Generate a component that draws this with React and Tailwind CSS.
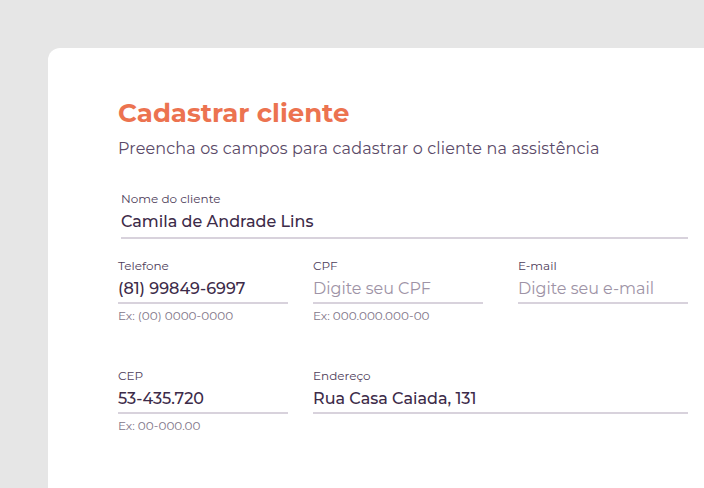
import React from "react";

const Field = ({ label, value, placeholder, helper, className = "", padClass = "pb-[3px]" }) => (
  <div className={className}>
    <label className="block text-[12px] leading-[14px] text-[#4e3d5a]">{label}</label>
    <div className={`mt-[6px] border-b-2 border-[#d8d2dc] ${padClass}`}>
      {value ? (
        <span className="block text-[16px] leading-[20px] font-medium text-[#3d2b49]">{value}</span>
      ) : (
        <span className="block text-[16px] leading-[20px] text-[#9e93a6]">{placeholder}</span>
      )}
    </div>
    {helper && <p className="mt-[5px] text-[12px] leading-[14px] text-[#7f7689]">{helper}</p>}
  </div>
);

export default function App() {
  return (
    <div className="h-[488px] w-[704px] overflow-hidden bg-[#e6e6e6] pl-[48px] pt-[48px] font-['Montserrat','Open_Sans',sans-serif]">
      <div className="h-[480px] w-[700px] rounded-tl-[12px] bg-white pl-[70px] pt-[50px]">
        <h1 className="text-[26px] leading-[30px] font-bold text-[#ec7350]">Cadastrar cliente</h1>
        <p className="mt-[11px] text-[16px] leading-[20px] tracking-[0.15px] text-[#5b4a68]">
          Preencha os campos para cadastrar o cliente na assistência
        </p>

        <div className="w-[570px]">
          <Field className="mt-[33px] pl-[3px] pr-0" padClass="pb-[5px]" label="Nome do cliente" value="Camila de Andrade Lins" />

          <div className="mt-[20px] flex">
            <Field className="w-[170px]" label="Telefone" value="(81) 99849-6997" helper="Ex: (00) 0000-0000" />
            <Field className="ml-[25px] w-[170px]" label="CPF" placeholder="Digite seu CPF" helper="Ex: 000.000.000-00" />
            <Field className="ml-[35px] w-[170px]" label="E-mail" placeholder="Digite seu e-mail" />
          </div>

          <div className="mt-[46px] flex">
            <Field className="w-[170px]" label="CEP" value="53-435.720" helper="Ex: 00-000.00" />
            <Field className="ml-[25px] w-[375px]" label="Endereço" value="Rua Casa Caiada, 131" />
          </div>
        </div>
      </div>
    </div>
  );
}
